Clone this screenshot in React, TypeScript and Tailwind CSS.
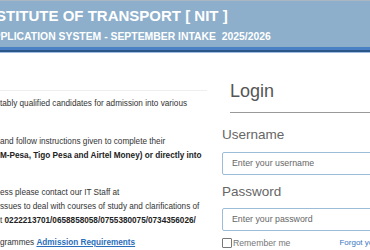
import React from "react";

export default function App() {
  return (
    <div className="w-[370px] h-[250px] overflow-hidden bg-white relative" style={{ fontFamily: '"Liberation Sans", Arial, sans-serif' }}>
      {/* Header */}
      <div className="border-t border-[#a9b7c4]">
        <div className="h-[46px] bg-[#8dafcb] relative overflow-hidden">
          <div className="whitespace-nowrap text-white font-bold text-[15px] leading-[18px] pt-[6px] ml-[-19px]">
            INSTITUTE OF TRANSPORT [ NIT ]
          </div>
          <div className="whitespace-nowrap text-white font-bold text-[10.4px] leading-[14px] mt-[5px] ml-[-14px]">
            APPLICATION SYSTEM - SEPTEMBER INTAKE&nbsp;&nbsp;2025/2026
          </div>
        </div>
        <div className="h-[3px] bg-[#4a80c4]" />
        <div className="h-[2px] bg-[#2c5689]" />
        <div className="h-[1px] bg-[#9dbbe0]" />
      </div>

      {/* Body */}
      <div className="flex">
        {/* Left column */}
        <div className="w-[207px] shrink-0 overflow-hidden text-[8.2px] leading-[14px] text-[#333]">
          <div className="mt-[37px] h-px bg-[#eeeeee]" />
          <div className="mt-[6px] whitespace-nowrap">tably qualified candidates for admission into various</div>
          <div className="h-[14px]" />
          <div className="mt-[10px] whitespace-nowrap">and follow instructions given to complete their</div>
          <div className="whitespace-nowrap font-bold text-[#222]">M-Pesa, Tigo Pesa and Airtel Money) or directly into</div>
          <div className="h-[14px]" />
          <div className="mt-[9px] whitespace-nowrap">ess please contact our IT Staff at</div>
          <div className="whitespace-nowrap">ssues to deal with courses of study and clarifications of</div>
          <div className="whitespace-nowrap">
            t <span className="font-bold text-[#222]">0222213701/0658858058/0755380075/0734356026/</span>
          </div>
          <div className="mt-[8px] whitespace-nowrap">
            grammes <a className="text-[#2a6ebb] underline font-bold" href="#">Admission Requirements</a>
          </div>
        </div>

        {/* Right column */}
        <div className="ml-[15px] w-[200px] shrink-0">
          <div className="mt-[27px] ml-[8px] text-[18px] leading-[22px] text-[#555]">Login</div>
          <div className="mt-[10px] ml-[8px] h-px bg-[#999]" />
          <div className="mt-[14px] text-[13.5px] leading-[16px] text-[#666]">Username</div>
          <div className="mt-[9px] h-[23px] border border-[#9dbcd8] rounded-[2px] flex items-center pl-[9px] text-[8.8px] text-[#666]">
            Enter your username
          </div>
          <div className="mt-[9px] text-[13.5px] leading-[16px] text-[#666]">Password</div>
          <div className="mt-[8px] h-[23px] border border-[#9dbcd8] rounded-[2px] flex items-center pl-[9px] text-[8.8px] text-[#666]">
            Enter your password
          </div>
          <div className="mt-[6px] flex items-center whitespace-nowrap">
            <div className="w-[10px] h-[10px] shrink-0 border border-[#777] rounded-[1px] bg-white" />
            <span className="ml-[1px] text-[8.7px] leading-[12px] text-[#777]">Remember me</span>
            <a className="ml-[49px] text-[8px] leading-[12px] text-[#3a78c2]" href="#">Forgot your password?</a>
          </div>
        </div>
      </div>
    </div>
  );
}
